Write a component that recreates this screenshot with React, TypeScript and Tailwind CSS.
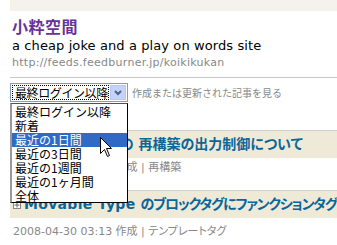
import React from "react";

const jp = { fontFamily: '"DejaVu Sans", "Noto Sans CJK JP", sans-serif' };
const jpOnly = { fontFamily: '"Noto Sans CJK JP", sans-serif' };

export default function App() {
  const items = ["最終ログイン以降", "新着", "最近の1日間", "最近の3日間", "最近の1週間", "最近の1ヶ月間", "全体"];
  return (
    <div className="relative w-[337px] h-[245px] overflow-hidden bg-white pl-[10px]" style={jp}>
      <div className="h-[11px] bg-[#f5f2ee]" />
      <div className="pl-[2px]">
        <div className="mt-[4px] h-[22px] leading-[22px] text-[16px] font-bold text-[#663399] tracking-[0.5px]" style={jpOnly}>小粋空間</div>
        <div className="h-[18px] leading-[18px] text-[13px] text-black tracking-[0.1px]">a cheap joke and a play on words site</div>
        <div className="h-[16px] leading-[16px] text-[11px] text-[#888888] tracking-[0.27px]">http://feeds.feedburner.jp/koikikukan</div>
      </div>
      <div className="mt-[6px] border-t border-[#c8c8c8]" />
      <div className="mt-[5px] flex items-center h-[19px]">
        <div className="flex items-center w-[118px] h-[19px] border border-[#7f9db9] bg-white">
          <div className="ml-[1px] flex-1 h-[15px] border border-dotted border-black leading-[13px] text-[12px] text-black pl-[2px] tracking-[-0.4px] whitespace-nowrap overflow-hidden" style={jpOnly}>最終ログイン以降</div>
          <div className="ml-[1px] mr-[1px] w-[16px] h-[15px] bg-[#c3d3fd] border border-[#b4c8f6] flex items-center justify-center">
            <svg width="8" height="6" viewBox="0 0 8 6"><path d="M1 1 L4 4 L7 1" stroke="#4d6185" strokeWidth="2" fill="none" /></svg>
          </div>
        </div>
        <div className="ml-[4px] text-[10px] text-[#888888] leading-[19px]" style={jpOnly}>作成または更新された記事を見る</div>
      </div>
      <div className="mt-[28px] border-t border-[#d0d0d0] h-[28px] bg-[#efead8] flex items-center pl-[3px] whitespace-nowrap [font-feature-settings:'palt']">
        <span className="inline-flex items-center justify-center w-[8px] h-[8px] border border-[#888] mr-[3px] bg-white">
          <svg width="6" height="6" viewBox="0 0 6 6"><path d="M3 0.5 V5.5 M0.5 3 H5.5" stroke="#666" strokeWidth="1" /></svg>
        </span>
        <span className="text-[14px] font-bold text-[#0a6699]">
          <span className="tracking-[-1px]">Movable Type</span>の 再構築の出力制御について
        </span>
      </div>
      <div className="h-[19px] leading-[19px] pl-[3px] text-[11px] text-[#888888] whitespace-nowrap [font-feature-settings:'palt']">2008-04-30 02:11 作成 | 再構築</div>
      <div className="mt-[13px] border-t border-[#d0d0d0] h-[28px] bg-[#efead8] flex items-center pl-[3px] whitespace-nowrap [font-feature-settings:'palt']">
        <span className="inline-flex items-center justify-center w-[8px] h-[8px] border border-[#888] mr-[3px] bg-white">
          <svg width="6" height="6" viewBox="0 0 6 6"><path d="M3 0.5 V5.5 M0.5 3 H5.5" stroke="#666" strokeWidth="1" /></svg>
        </span>
        <span className="text-[14px] font-bold text-[#0a6699]">
          <span className="tracking-[0.3px]">Movable Type </span><span className="tracking-[-1.2px]">のブロックタグにファンクションタグで値を渡す</span>
        </span>
      </div>
      <div className="mt-[5px] h-[18px] leading-[18px] pl-[3px] text-[11px] text-[#888888] whitespace-nowrap [font-feature-settings:'palt']">2008-04-30 03:13 作成 | テンプレートタグ</div>

      <div className="absolute left-[10px] top-[103px] w-[118px] h-[100px] bg-white border border-black border-l-[2px] border-l-[#999] border-t-[#6b4b35] pt-[1px]" style={jpOnly}>
        {items.map((t, i) => (
          <div key={t} className={"h-[14px] leading-[14px] text-[12px] pl-[3px] whitespace-nowrap " + (i === 2 ? "bg-[#316ac5] text-white" : "text-black")}>{t}</div>
        ))}
      </div>
      <svg className="absolute left-[100px] top-[137px]" width="13" height="21" viewBox="0 0 13 21">
        <path d="M0.5 0.5 L0.5 16.5 L4.5 12.5 L7.5 19.5 L9.5 18.5 L6.5 11.5 L11.5 11.5 Z" fill="white" stroke="black" strokeWidth="1" />
      </svg>
    </div>
  );
}
